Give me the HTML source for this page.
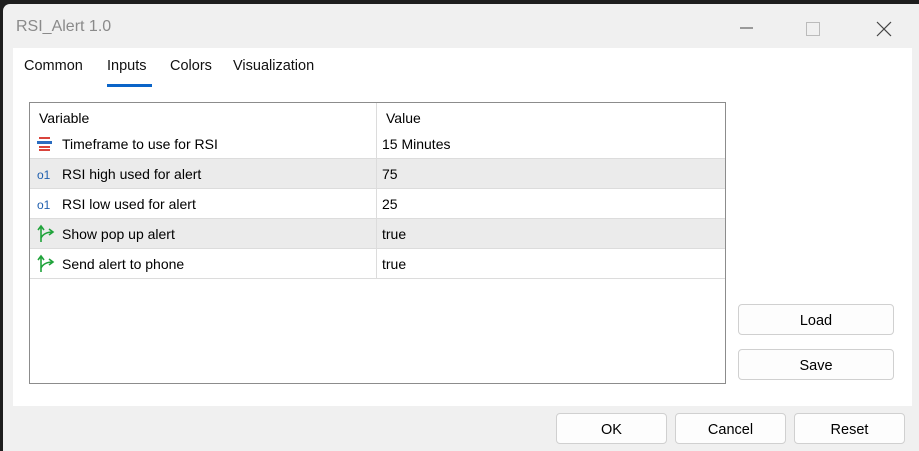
<!DOCTYPE html>
<html><head><style>
*{margin:0;padding:0;box-sizing:border-box}
body{width:919px;height:451px;overflow:hidden;background:#1e1e1e;font-family:"Liberation Sans",sans-serif;font-size:14px;color:#000;position:relative}
.win{position:absolute;left:3px;top:4px;width:916px;height:447px;background:#f0f0f0;border-top-left-radius:7px}
.title{position:absolute;left:13px;top:14px;font-size:16px;color:#8a8a8a}
.panel{position:absolute;left:10px;top:44px;width:899px;height:358px;background:#fff}
.tab{position:absolute;top:58px;font-size:14.5px;color:#111}
.ul{position:absolute;left:107px;top:84px;width:45px;height:3px;background:#0a64c8}
.tbl{position:absolute;left:29px;top:102px;width:697px;height:282px;border:1px solid #8c8c8c;background:#fff}
.row{position:absolute;left:0;width:695px;height:30px;border-bottom:1px solid #dcdcdc}
.row span{position:absolute;top:7px}
.g{background:#ebebeb}
.div{position:absolute;left:346px;top:0;width:1px;height:176px;background:#dcdcdc}
.btn{position:absolute;height:31px;background:#fdfdfd;border:1px solid #d0d0d0;border-radius:4px;text-align:center;line-height:32px;font-size:14.5px}
.ic{position:absolute;left:7px;top:7px}
.o1{left:7px;color:#1f5fae;font-size:12px;top:9px!important}
</style></head><body>
<div class="win">
<div class="title">RSI_Alert 1.0</div>
<svg style="position:absolute;left:732px;top:16px" width="160" height="20">
<line x1="5" y1="8" x2="18" y2="8" stroke="#444" stroke-width="1"/>
<rect x="71.5" y="2.5" width="13" height="13" fill="none" stroke="#bbb"/>
<path d="M142 2L156 16M156 2L142 16" stroke="#444" stroke-width="1.2"/>
</svg>
<div class="panel"></div>
</div>
<div class="tab" style="left:24px">Common</div>
<div class="tab" style="left:107px">Inputs</div>
<div class="tab" style="left:170px">Colors</div>
<div class="tab" style="left:233px">Visualization</div>
<div class="ul"></div>
<div class="tbl">
<div class="row" style="top:0;border:none"><span style="left:9px">Variable</span><span style="left:356px">Value</span></div>
<div class="row" style="top:26px"><svg class="ic" width="16" height="16"><rect x="2" y="1" width="11" height="2" fill="#d9443c"/><rect x="0" y="5" width="15" height="3" fill="#2a6cc0"/><rect x="2" y="10" width="11" height="2" fill="#d9443c"/><rect x="2" y="13" width="11" height="2" fill="#d9443c"/></svg><span style="left:32px">Timeframe to use for RSI</span><span style="left:352px">15 Minutes</span></div>
<div class="row g" style="top:56px"><span class="o1">o1</span><span style="left:32px">RSI high used for alert</span><span style="left:352px">75</span></div>
<div class="row" style="top:86px"><span class="o1">o1</span><span style="left:32px">RSI low used for alert</span><span style="left:352px">25</span></div>
<div class="row g" style="top:116px"><svg class="ic" style="top:5px" width="20" height="20"><path d="M4 18L4 3M1 6L4 2L7 6M4 14Q7 8 16 8M12 5L16 8L12 11" fill="none" stroke="#1fa33a" stroke-width="1.6"/></svg><span style="left:32px">Show pop up alert</span><span style="left:352px">true</span></div>
<div class="row" style="top:146px"><svg class="ic" style="top:5px" width="20" height="20"><path d="M4 18L4 3M1 6L4 2L7 6M4 14Q7 8 16 8M12 5L16 8L12 11" fill="none" stroke="#1fa33a" stroke-width="1.6"/></svg><span style="left:32px">Send alert to phone</span><span style="left:352px">true</span></div>
<div class="div"></div>
</div>
<div class="btn" style="left:738px;top:304px;width:156px">Load</div>
<div class="btn" style="left:738px;top:349px;width:156px">Save</div>
<div class="btn" style="left:556px;top:413px;width:111px">OK</div>
<div class="btn" style="left:675px;top:413px;width:111px">Cancel</div>
<div class="btn" style="left:794px;top:413px;width:111px">Reset</div>
</body></html>
